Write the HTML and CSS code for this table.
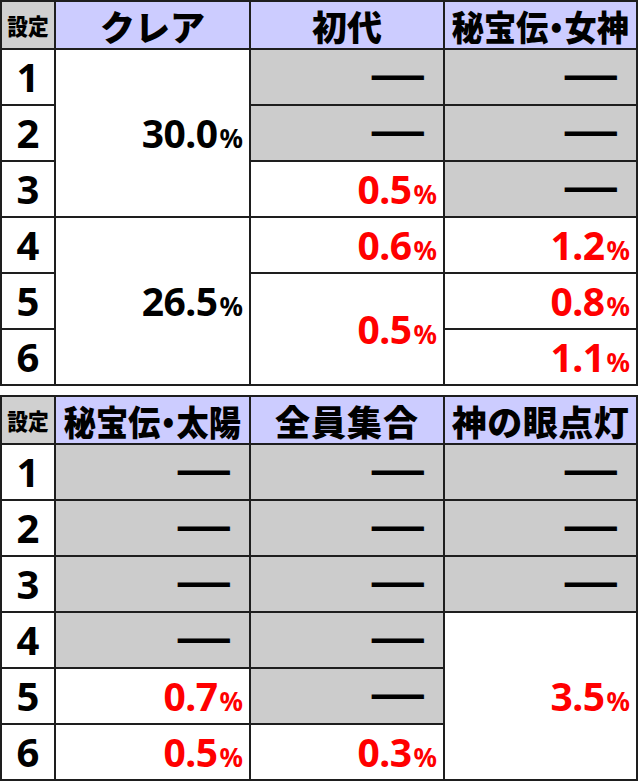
FILE: index.html
```html
<!DOCTYPE html>
<html lang="ja">
<head>
<meta charset="utf-8">
<title>設定別確率</title>
<link rel="stylesheet" href="styles.css">
</head>
<body>
<div class="grid">
  <div class="cell head set"><span class="st">設定</span></div>
  <div class="cell head"><span class="ht">クレア</span></div>
  <div class="cell head"><span class="ht">初代</span></div>
  <div class="cell head"><span class="ht narrow">秘宝伝<span class="dot">・</span>女神</span></div>

  <div class="cell num">1</div>
  <div class="cell val span3"><span class="v">30.0<span class="pct">%</span></span></div>
  <div class="cell g"><span class="dash">―</span></div>
  <div class="cell g"><span class="dash">―</span></div>

  <div class="cell num">2</div>
  <div class="cell g"><span class="dash">―</span></div>
  <div class="cell g"><span class="dash">―</span></div>

  <div class="cell num">3</div>
  <div class="cell val red"><span class="v">0.5<span class="pct">%</span></span></div>
  <div class="cell g"><span class="dash">―</span></div>

  <div class="cell num">4</div>
  <div class="cell val span3"><span class="v">26.5<span class="pct">%</span></span></div>
  <div class="cell val red"><span class="v">0.6<span class="pct">%</span></span></div>
  <div class="cell val red"><span class="v">1.2<span class="pct">%</span></span></div>

  <div class="cell num">5</div>
  <div class="cell val red span2"><span class="v">0.5<span class="pct">%</span></span></div>
  <div class="cell val red"><span class="v">0.8<span class="pct">%</span></span></div>

  <div class="cell num">6</div>
  <div class="cell val red"><span class="v">1.1<span class="pct">%</span></span></div>
</div>

<div class="grid">
  <div class="cell head set"><span class="st">設定</span></div>
  <div class="cell head"><span class="ht narrow">秘宝伝<span class="dot">・</span>太陽</span></div>
  <div class="cell head"><span class="ht wide4">全員集合</span></div>
  <div class="cell head"><span class="ht wide5">神の眼点灯</span></div>

  <div class="cell num">1</div>
  <div class="cell g"><span class="dash">―</span></div>
  <div class="cell g"><span class="dash">―</span></div>
  <div class="cell g"><span class="dash">―</span></div>

  <div class="cell num">2</div>
  <div class="cell g"><span class="dash">―</span></div>
  <div class="cell g"><span class="dash">―</span></div>
  <div class="cell g"><span class="dash">―</span></div>

  <div class="cell num">3</div>
  <div class="cell g"><span class="dash">―</span></div>
  <div class="cell g"><span class="dash">―</span></div>
  <div class="cell g"><span class="dash">―</span></div>

  <div class="cell num">4</div>
  <div class="cell g"><span class="dash">―</span></div>
  <div class="cell g"><span class="dash">―</span></div>
  <div class="cell val red span3"><span class="v">3.5<span class="pct">%</span></span></div>

  <div class="cell num">5</div>
  <div class="cell val red"><span class="v">0.7<span class="pct">%</span></span></div>
  <div class="cell g"><span class="dash">―</span></div>

  <div class="cell num">6</div>
  <div class="cell val red"><span class="v">0.5<span class="pct">%</span></span></div>
  <div class="cell val red"><span class="v">0.3<span class="pct">%</span></span></div>
</div>
</body>
</html>
```

FILE: styles.css
```css
html, body {
  margin: 0;
  padding: 0;
  background: #ffffff;
}

body {
  font-family: "Noto Sans CJK JP", "Noto Sans", sans-serif;
  color: #000000;
}

.grid {
  display: grid;
  box-sizing: border-box;
  width: 638px;
  padding: 2px;
  gap: 2px;
  background: #1e1e1e;
  grid-template-columns: 52px 193px 192px 191px;
  grid-template-rows: 46px repeat(6, 54px);
}

.grid + .grid {
  margin-top: 9px;
}

.cell {
  background: #ffffff;
  display: flex;
  align-items: center;
  justify-content: flex-end;
  padding-right: 6px;
  line-height: 1.2;
  min-width: 0;
}

.head {
  background: #ccccff;
  justify-content: center;
  padding: 0;
  font-weight: 900;
  font-size: 35px;
  line-height: 1;
}

.set {
  background: #d0d0d0;
  font-size: 23px;
}

.st {
  display: inline-block;
  transform: scaleX(0.9);
  white-space: nowrap;
}

.ht {
  display: inline-block;
  white-space: nowrap;
}

.dot {
  font-feature-settings: "halt" 1;
}

.narrow {
  transform: scaleX(0.92);
}

.wide4 {
  letter-spacing: 1px;
}

.wide5 {
  letter-spacing: 0.5px;
}

.num {
  justify-content: center;
  padding: 0;
  font-family: "Noto Sans", sans-serif;
  font-weight: 700;
  font-size: 40px;
}

.val {
  font-family: "Noto Sans", sans-serif;
  font-weight: 700;
  font-size: 39px;
}

.v {
  white-space: nowrap;
  letter-spacing: -0.5px;
}

.red {
  color: #ff0000;
}

.pct {
  font-size: 26px;
  margin-left: 2px;
  letter-spacing: 0;
}

.g {
  background: #cccccc;
}

.dash {
  display: inline-block;
  font-family: "Noto Sans CJK JP", sans-serif;
  font-weight: 900;
  font-size: 28px;
  line-height: 1;
  margin-right: 12px;
  color: #000000;
  -webkit-text-stroke: 3px #000000;
  transform: scaleX(1.95);
  transform-origin: right center;
}

.span3 {
  grid-row: span 3;
}

.span2 {
  grid-row: span 2;
}
```
